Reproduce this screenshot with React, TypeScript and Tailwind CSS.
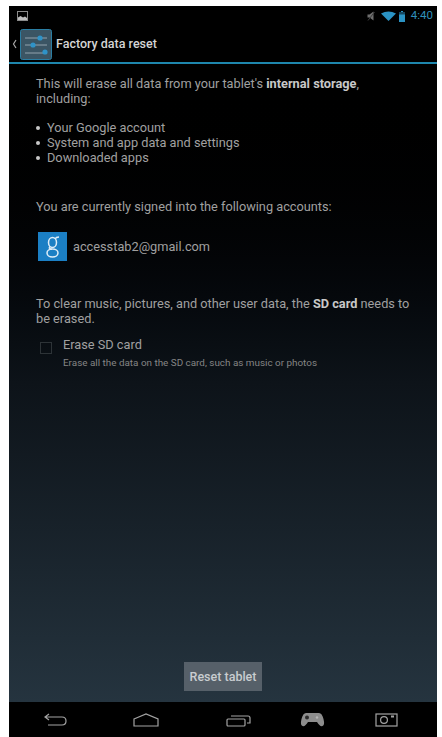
import React from 'react';

const StatusBar = () => (
  <div className="flex h-[20px] items-center justify-between pl-[8px] pr-[4px]">
    <svg width="11" height="10" viewBox="0 0 11 10">
      <rect x="0.5" y="0.5" width="10" height="9" fill="none" stroke="#8a8a8a" />
      <path d="M1 9 L1 6.5 L3.5 5 L6 6.5 L8 5.5 L10 7 L10 9 Z" fill="#bdbdbd" />
    </svg>
    <div className="flex items-center">
      <svg width="8" height="10" viewBox="0 0 8 10" className="mr-[6px]">
        <path d="M0.5 3.5 L2.5 3.5 L6.5 0.5 L6.5 9.5 L2.5 6.5 L0.5 6.5 Z" fill="#6f6f6f" />
        <path d="M1 9.5 L7.5 1" stroke="#3d3d3d" strokeWidth="1" />
      </svg>
      <svg width="15" height="10" viewBox="0 0 15 10" className="mr-[3px]">
        <path d="M0 2.6 Q7.5 -1.6 15 2.6 L7.5 10 Z" fill="#2b93c4" />
      </svg>
      <svg width="6" height="11" viewBox="0 0 6 11" className="mr-[6px]">
        <rect x="2" y="0" width="2" height="1" fill="#2b93c4" />
        <rect x="0" y="1" width="6" height="10" fill="#2b93c4" />
        <rect x="0" y="1" width="6" height="2.5" fill="#15475f" />
      </svg>
      <span className="text-[11.5px] text-[#2f8fba]">4:40</span>
    </div>
  </div>
);

const ActionBar = () => (
  <div className="flex h-[38px] items-center border-b-2 border-[#1e87ad] pl-[3px]">
    <svg width="5" height="10" viewBox="0 0 5 10" className="mr-[3px]">
      <path d="M4 1 L1.5 5 L4 9" fill="none" stroke="#a8a8a8" strokeWidth="1.2" />
    </svg>
    <svg width="32" height="31" viewBox="0 0 32 31">
      <rect x="0.5" y="0.5" width="31" height="30" rx="2" fill="#3b5564" stroke="#2a7ea3" />
      <path d="M5 9 H27 M5 16 H27 M5 24 H27" stroke="#93a3ad" strokeWidth="1" />
      <circle cx="20" cy="9" r="2.6" fill="#2f93c8" />
      <circle cx="13" cy="16" r="2.6" fill="#2f93c8" />
      <circle cx="25" cy="23" r="2.6" fill="#2f93c8" />
    </svg>
    <span className="ml-[4px] text-[12.5px] font-medium text-[#d4d4d4]">Factory data reset</span>
  </div>
);

const NavBar = () => (
  <div className="flex h-[35px] items-center bg-black pl-[35px]">
    <svg width="23" height="13" viewBox="0 0 23 13" className="mr-[66px]">
      <path d="M5 1 L1 4 L5 7 M1 4 H18 Q22 4 22 8 Q22 12 18 12 H4" fill="none" stroke="#a3a3a3" strokeWidth="1.2" />
    </svg>
    <svg width="26" height="14" viewBox="0 0 26 14" className="mr-[67px]">
      <path d="M1 6 L13 1 L25 6 V13 H1 Z" fill="none" stroke="#a3a3a3" strokeWidth="1.2" />
    </svg>
    <svg width="25" height="14" viewBox="0 0 25 14" className="mr-[49px]">
      <rect x="1" y="6" width="18" height="7" rx="1" fill="none" stroke="#a3a3a3" strokeWidth="1.2" />
      <path d="M5 3 H22 Q24 3 24 5 V10 H21" fill="none" stroke="#a3a3a3" strokeWidth="1.2" />
    </svg>
    <svg width="25" height="15" viewBox="0 0 25 15" className="mr-[50px]">
      <path d="M6 1 H19 Q22 1 23.5 7 Q25 13 22.5 14 Q20 15 17 10 H8 Q5 15 2.5 14 Q0 13 1.5 7 Q3 1 6 1 Z" fill="#8d8d8d" />
      <circle cx="7" cy="5.5" r="2" fill="#2a2a2a" />
      <circle cx="17" cy="5.5" r="1.2" fill="#b5b5b5" />
    </svg>
    <svg width="23" height="14" viewBox="0 0 23 14">
      <rect x="1" y="1" width="21" height="12" fill="none" stroke="#a3a3a3" strokeWidth="1.2" />
      <circle cx="9" cy="7" r="3.4" fill="none" stroke="#a3a3a3" strokeWidth="1.2" />
      <rect x="16" y="2.5" width="3" height="2" fill="#a3a3a3" />
    </svg>
  </div>
);

const GoogleIcon = () => (
  <div className="h-[29px] w-[29px] bg-[#1b7fc4]">
    <svg width="29" height="29" viewBox="0 0 29 29">
      <g fill="none" stroke="#dcecf7" strokeWidth="1.5">
        <ellipse cx="14.5" cy="10.5" rx="4" ry="5" />
        <ellipse cx="14.5" cy="21" rx="5.5" ry="4" />
        <path d="M12 14.5 Q10 17 14 17.3" />
        <path d="M17 7 Q18 5 21 5" />
      </g>
    </svg>
  </div>
);

const bullets = ['Your Google account', 'System and app data and settings', 'Downloaded apps'];

export default function App() {
  return (
    <div className="h-[737px] w-[442px] bg-white pl-[9px] pr-[5px] pt-[6px] font-['Roboto',sans-serif]">
      <div className="flex h-[731px] flex-col bg-black">
        <StatusBar />
        <ActionBar />
        <div className="flex min-h-0 flex-1 flex-col bg-gradient-to-b from-[#000000] via-[#0d1319] to-[#25343f] pl-[27px] pr-[24px] pt-[12px] text-[12.75px] leading-[15px] text-[#a0a0a0]">
          <p>
            This will erase all data from your tablet's <b className="font-bold text-[#c8c8c8]">internal storage</b>, including:
          </p>
          <ul className="mt-[14px]">
            {bullets.map((b) => (
              <li key={b} className="flex items-center">
                <span className="mr-[7px] h-[4px] w-[4px] rounded-full bg-[#c8c8c8]" />
                {b}
              </li>
            ))}
          </ul>
          <p className="mt-[34px]">You are currently signed into the following accounts:</p>
          <div className="mt-[18px] flex items-center pl-[2px]">
            <GoogleIcon />
            <span className="ml-[6px]">accesstab2@gmail.com</span>
          </div>
          <p className="mt-[35px]">
            To clear music, pictures, and other user data, the <b className="font-bold text-[#c8c8c8]">SD card</b> needs to be erased.
          </p>
          <div className="mt-[11px] flex pl-[4px]">
            <div className="mt-[5px] h-[12px] w-[12px] border border-[#2d3337]" />
            <div className="ml-[11px]">
              <div>Erase SD card</div>
              <div className="mt-[5px] text-[9.9px] leading-[12px] text-[#858585]">
                Erase all the data on the SD card, such as music or photos
              </div>
            </div>
          </div>
          <div className="mt-auto flex justify-center pb-[11px] pr-[3px]">
            <button className="flex h-[29px] w-[78px] items-center justify-center bg-[#566069] text-[12.5px] font-medium text-[#c9cdd0]">
              Reset tablet
            </button>
          </div>
        </div>
        <NavBar />
      </div>
    </div>
  );
}
